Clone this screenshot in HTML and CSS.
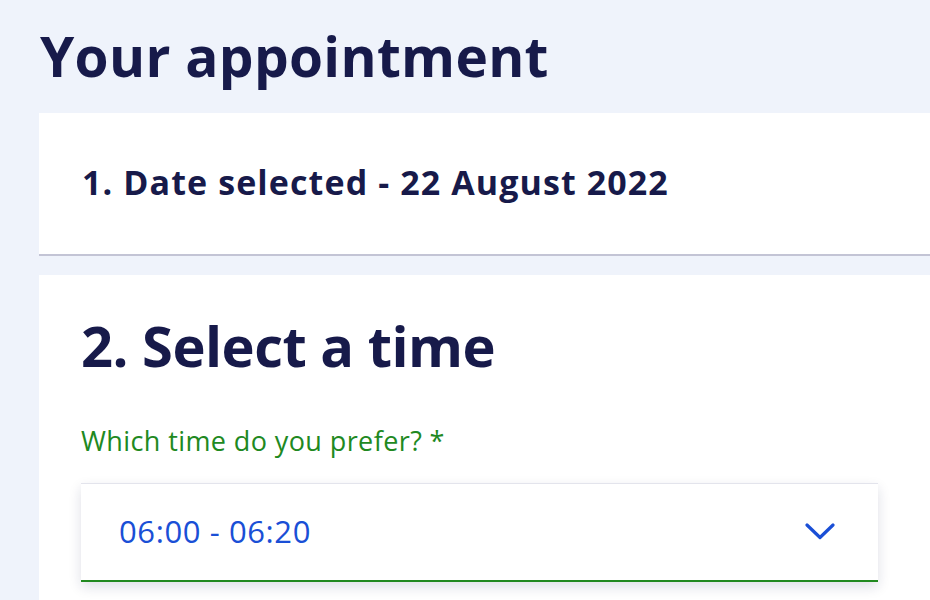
FILE: index.html
```html
<!DOCTYPE html>
<html lang="en">
<head>
<meta charset="utf-8">
<title>Your appointment</title>
<link rel="stylesheet" href="styles.css">
</head>
<body>
<main class="page">
  <h1 class="page-title">Your appointment</h1>
  <section class="card card-done">
    <h2 class="step-done">1. Date selected - 22 August 2022</h2>
  </section>
  <section class="card card-active">
    <h2 class="step-title">2. Select a time</h2>
    <label class="field-label" for="time">Which time do you prefer? *</label>
    <div class="select" id="time">
      <span class="select-value">06:00 - 06:20</span>
      <svg class="chevron" width="30" height="17" viewBox="0 0 30 17" aria-hidden="true">
        <path d="M2 2 L15 14.5 L28 2" fill="none" stroke="#1a4fd6" stroke-width="3.2" stroke-linecap="round" stroke-linejoin="round"/>
      </svg>
    </div>
  </section>
</main>
</body>
</html>
```

FILE: styles.css
```css
html, body {
  margin: 0;
  padding: 0;
}
body {
  background: #eff3fb;
  font-family: "Open Sans", "Noto Sans", sans-serif;
  color: #171a4a;
  overflow: hidden;
}
.page {
  padding-left: 39px;
}
.page-title {
  margin: 24px 0 25px 1px;
  font-size: 55px;
  line-height: 64px;
  font-weight: 700;
  letter-spacing: 0.3px;
}
.card {
  background: #ffffff;
}
.card-done {
  padding: 49px 0 52px 43px;
  border-bottom: 2px solid #c3c4d5;
  margin-bottom: 19px;
}
.step-done {
  margin: 0;
  font-size: 34px;
  line-height: 40px;
  font-weight: 700;
  letter-spacing: 1.1px;
}
.card-active {
  padding: 38px 52px 40px 42px;
}
.step-title {
  margin: 0 0 48px;
  font-size: 56px;
  line-height: 64px;
  font-weight: 700;
  letter-spacing: -0.5px;
}
.field-label {
  display: block;
  font-size: 27px;
  line-height: 32px;
  color: #21891f;
  margin-bottom: 26px;
  letter-spacing: 0.4px;
}
.select {
  display: flex;
  align-items: center;
  justify-content: space-between;
  background: #ffffff;
  border-top: 1px solid #e3e4ec;
  border-bottom: 2px solid #21891f;
  padding: 29px 43px 31px 38px;
  box-shadow: 0 5px 12px rgba(20, 25, 80, 0.14);
}
.select-value {
  font-size: 31px;
  line-height: 36px;
  color: #1a4fd6;
  letter-spacing: 0.6px;
}
.chevron {
  display: block;
}
```
